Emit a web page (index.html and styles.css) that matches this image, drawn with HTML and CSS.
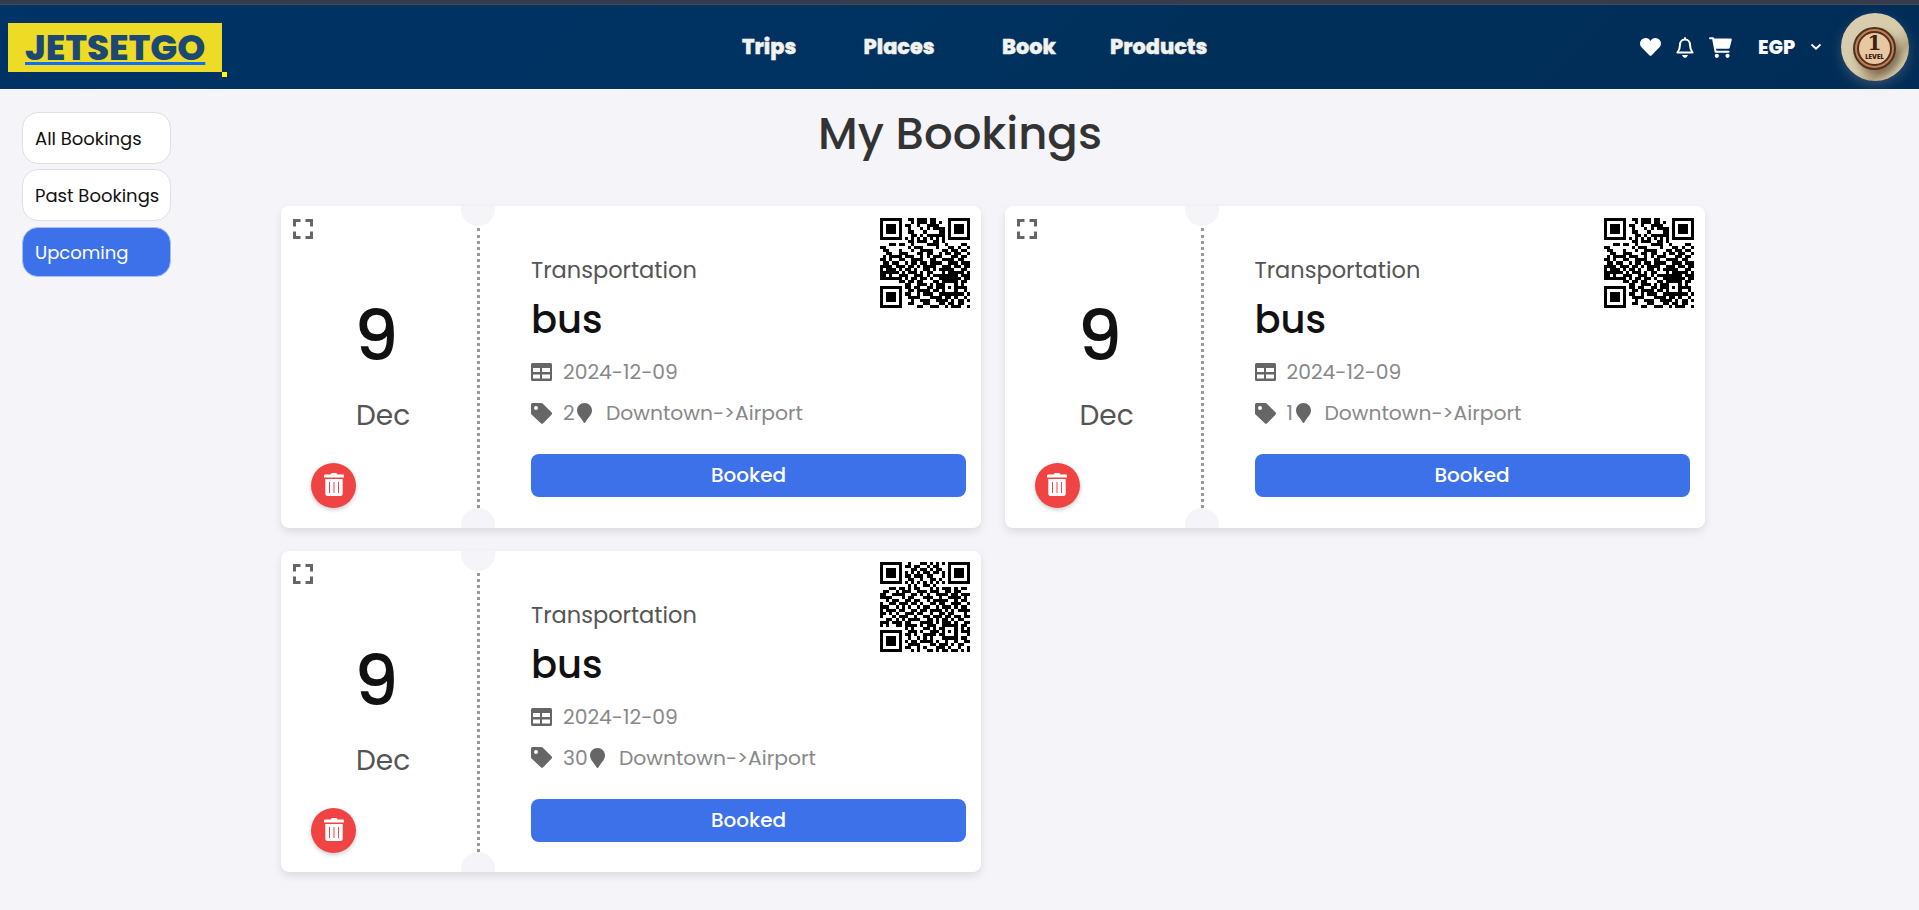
FILE: index.html
```html
<!DOCTYPE html>
<html lang="en">
<head>
<meta charset="utf-8">
<title>JETSETGO - My Bookings</title>
<link rel="stylesheet" href="styles.css">
</head>
<body>
<svg class="sprite" width="0" height="0">
  <symbol id="expand" viewBox="0 0 20 20"><path d="M1.500 7.500v-6h6M12.500 1.500h6v6M18.500 12.500v6h-6M7.500 18.500h-6v-6" fill="none" stroke="#666" stroke-width="3"/></symbol>
  <symbol id="table" viewBox="0 0 21 18"><path fill="#666" fill-rule="evenodd" d="M1.500 0h18q1.500 0 1.500 1.500v15q0 1.500-1.500 1.500h-18Q0 18 0 16.500v-15Q0 0 1.500 0zM2 5v4h7V5zM11 5v4h8V5zM2 11.500v4h7v-4zM11 11.500v4h8v-4z"/></symbol>
  <symbol id="tag" viewBox="0 0 21 21"><path fill="#666" fill-rule="evenodd" d="M1.500 0H11l9.500 9.300q1 1.200 0 2.400l-8.300 8.500q-1.200 1-2.400 0L0 11V1.500Q0 0 1.500 0zM5 3a2 2 0 1 0 0 4a2 2 0 1 0 0-4z"/></symbol>
  <symbol id="pin" viewBox="0 0 15 20"><path fill="#666" d="M7.500 0C3.300 0 0 3.200 0 7.500C0 12 4 14.500 6.500 19.200q1 1.500 2 0C11 14.500 15 12 15 7.500C15 3.200 11.700 0 7.500 0z"/></symbol>
  <symbol id="trash" viewBox="0 0 20 23"><path fill="#fff" fill-rule="evenodd" d="M6.500 1.500Q7 0 8 0h4q1 0 1.500 1.500H19q1 0 1 1.200V4.500H0V2.700q0-1.200 1-1.200zM1.300 6h17.400v14.500q0 2.500-2.500 2.500H3.800q-2.500 0-2.500-2.500zM5 9v11h1V9zM9.500 9v11h1V9zM14 9v11h1V9z"/></symbol>
</svg>
<div class="topstrip"></div>
<header class="header">
  <div class="brand"><a class="logo" href="#">JETSETGO</a><span class="dot"></span></div>
  <nav class="nav">
    <a class="trips">Trips</a><a class="places">Places</a><a class="book">Book</a><a class="products">Products</a>
  </nav>
  <div class="tools">
    <svg class="heart" width="21" height="18" viewBox="0 0 21 18"><path fill="#fff" d="M10.500 3C8.500-.5 4.500-.8 2 1.300C-.5 3.500-.5 7 1.500 9.300l7.800 8q1.200 1 2.400 0l7.800-8C21.500 7 21.500 3.500 19 1.300C16.500-.8 12.500-.5 10.500 3z"/></svg>
    <svg class="bell" width="18" height="21" viewBox="0 0 18 21"><path d="M9 1v1.500M9 2.600c-3.200 0-5 2.400-5 5.400c0 4-1 5.500-2.600 7.500h15.200C15 13.500 14 12 14 8c0-3-1.800-5.400-5-5.400z" fill="none" stroke="#fff" stroke-width="2" stroke-linejoin="round" stroke-linecap="round"/><path fill="#fff" d="M6 18h6q-1 3-3 3t-3-3z"/></svg>
    <svg class="cart" width="23" height="21" viewBox="0 0 23 21"><path d="M1 1.200h3L6.600 14.800h13" fill="none" stroke="#fff" stroke-width="2" stroke-linecap="round" stroke-linejoin="round"/><path fill="#fff" d="M4.500 1.500H22q1 .2.800 1.200l-2 7.800q-.3 1.200-1.500 1.200H6.400z"/><circle cx="7.800" cy="18.800" r="2.100" fill="#fff"/><circle cx="18.500" cy="18.800" r="2.100" fill="#fff"/></svg>
    <span class="currency">EGP</span>
    <svg class="chevron" width="12" height="8" viewBox="0 0 12 8"><path d="M1.500 1.500L6 5.700l4.500-4.200" fill="none" stroke="#fff" stroke-width="2"/></svg>
    <div class="avatar"><div class="coin"><div class="coin-face"><span class="coin-number">1</span><span class="coin-label">LEVEL</span></div></div></div>
  </div>
</header>
<main class="main">
  <aside class="filters">
    <button class="filter">All Bookings</button>
    <button class="filter past">Past Bookings</button>
    <button class="filter active">Upcoming</button>
  </aside>
  <section class="content">
    <h1 class="title">My Bookings</h1>
    <div class="grid">
      <article class="ticket">
        <div class="stub">
          <svg class="expand"><use href="#expand"/></svg>
          <div class="day">9</div><div class="month">Dec</div>
          <button class="delete"><svg width="20" height="23"><use href="#trash"/></svg></button>
        </div>
        <div class="divider"></div>
        <div class="info">
          <div class="kind">Transportation</div><h2 class="name">bus</h2>
          <div class="row date"><svg width="21" height="18"><use href="#table"/></svg><span>2024-12-09</span></div>
          <div class="row place"><svg width="21" height="21"><use href="#tag"/></svg><span class="qty">2</span><svg class="pin" width="15" height="20"><use href="#pin"/></svg><span class="route">Downtown-&gt;Airport</span></div>
          <button class="booked">Booked</button>
        </div>
        <svg class="qr" data-code="a" viewBox="0 0 29 29"></svg>
      </article>
      <article class="ticket">
        <div class="stub">
          <svg class="expand"><use href="#expand"/></svg>
          <div class="day">9</div><div class="month">Dec</div>
          <button class="delete"><svg width="20" height="23"><use href="#trash"/></svg></button>
        </div>
        <div class="divider"></div>
        <div class="info">
          <div class="kind">Transportation</div><h2 class="name">bus</h2>
          <div class="row date"><svg width="21" height="18"><use href="#table"/></svg><span>2024-12-09</span></div>
          <div class="row place"><svg width="21" height="21"><use href="#tag"/></svg><span class="qty one">1</span><svg class="pin" width="15" height="20"><use href="#pin"/></svg><span class="route">Downtown-&gt;Airport</span></div>
          <button class="booked">Booked</button>
        </div>
        <svg class="qr" data-code="a" viewBox="0 0 29 29"></svg>
      </article>
      <article class="ticket">
        <div class="stub">
          <svg class="expand"><use href="#expand"/></svg>
          <div class="day">9</div><div class="month">Dec</div>
          <button class="delete"><svg width="20" height="23"><use href="#trash"/></svg></button>
        </div>
        <div class="divider"></div>
        <div class="info">
          <div class="kind">Transportation</div><h2 class="name">bus</h2>
          <div class="row date"><svg width="21" height="18"><use href="#table"/></svg><span>2024-12-09</span></div>
          <div class="row place"><svg width="21" height="21"><use href="#tag"/></svg><span class="qty thirty">30</span><svg class="pin" width="15" height="20"><use href="#pin"/></svg><span class="route">Downtown-&gt;Airport</span></div>
          <button class="booked">Booked</button>
        </div>
        <svg class="qr" data-code="b" viewBox="0 0 29 29"></svg>
      </article>
    </div>
  </section>
</main>
<script src="qr.js"></script>
</body>
</html>
```
FILE: styles.css
```css
* { box-sizing: border-box; }
body { margin: 0; height: 910px; overflow: hidden; background: #f4f4f9; font-family: Poppins, Inter, sans-serif; color: #111; }
button { font-family: inherit; border: 0; padding: 0; }
svg { flex: none; display: block; }
.sprite { position: absolute; }
.topstrip { height: 5px; background: #343c4e; border-bottom: 1px solid #464950; }
.header { height: 84px; display: flex; align-items: center; background: linear-gradient(135deg, #003366 0%, #003260 50%, #00305a 60%, #002d58 100%); }
.brand { display: flex; align-items: flex-end; width: 742px; padding-left: 8px; height: 48px; margin-top: 1px; }
.logo { width: 214px; height: 49px; padding-left: 17px; background: #eedb25; color: #1c4973; font-size: 35.700px; line-height: 50px; font-weight: 800; text-decoration: underline; text-decoration-color: #0d6efd; text-decoration-thickness: 3px; text-underline-offset: 2px; text-decoration-skip-ink: none; }
.dot { width: 5px; height: 5px; margin-bottom: -5px; background: #ff0; }
.nav { display: flex; color: #f3f1ed; font-size: 20.800px; font-weight: 800; line-height: 30px; width: 898px; -webkit-text-stroke: 0.400px #f3f1ed; }
.trips { width: 121.500px; }
.places { width: 138.500px; }
.book { width: 108px; }
.tools { display: flex; align-items: center; }
.bell { margin-left: 15px; }
.cart { margin-left: 15px; }
.currency { width: 52px; margin-left: 26px; padding-top: 1px; color: #fff; font-size: 19.200px; font-weight: 800; line-height: 28px; }
.avatar { margin-left: 19px; width: 68px; height: 68px; border-radius: 50%; background: linear-gradient(135deg, #d9cfb2, #d6cba9 55%, #b8a785 72%, #e0d6b9 88%); display: flex; align-items: center; justify-content: center; box-shadow: 0 4px 12px rgba(220,180,170,.25); }
.coin { width: 43px; height: 43px; border-radius: 50%; border: 2px solid #54301c; background: #b88158; padding: 2px; box-shadow: 4px 6px 7px rgba(80,60,40,.5); margin-top: 2px; margin-right: 1px; }
.coin-face { width: 35px; height: 35px; border-radius: 50%; border: 2px solid #54301c; background: #e9c7a0; display: flex; flex-direction: column; align-items: center; color: #3b2114; }
.coin-number { font: bold 20px/18px "DejaVu Serif", serif; margin-top: 1px; }
.coin-label { font: 800 6.500px/10px Poppins, Inter, sans-serif; }
.main { display: flex; }
.filters { width: 281px; padding: 23px 0 0 22px; display: flex; flex-direction: column; align-items: flex-start; gap: 5px; }
.filter { width: 149px; height: 52px; border: 1px solid #e0e0e3; border-radius: 16px; background: #fff; color: #111; font-size: 18px; text-align: left; padding: 1px 0 0 12px; }
.active { margin-top: 1px; background: #3d71ea; color: #fff; border-color: #a9bdec; height: 50px; }
.content { width: 1425px; }
.title { margin: 0; height: 117px; padding-left: 537px; font-size: 45px; font-weight: 500; line-height: 89px; color: #333; white-space: nowrap; }
.grid { display: grid; grid-template-columns: 700px 700.500px; column-gap: 23.500px; row-gap: 23px; }
.ticket { position: relative; display: flex; height: 321.600px; background: #fff; border-radius: 8px; box-shadow: 0 4px 8px rgba(0,0,0,.1); }
.ticket::before, .ticket::after { content: ""; position: absolute; left: 180px; width: 34px; height: 20px; background: #f4f4f9; }
.ticket::before { top: 0; border-radius: 0 0 17px 17px; }
.ticket::after { bottom: 0; border-radius: 17px 17px 0 0; }
.stub { width: 196px; padding: 13px 0 0 12px; }
.expand { width: 20px; height: 20px; }
.day { margin: 47px 0 0 61px; height: 100px; font-size: 70px; font-weight: 500; line-height: 100px; }
.month { margin: 10px 0 0 63px; height: 40px; font-size: 28px; line-height: 40px; color: #555; }
.delete { margin: 27px 0 0 18px; width: 45px; height: 45px; border-radius: 50%; background: #f04444; display: flex; align-items: center; justify-content: center; box-shadow: 0 2px 4px rgba(0,0,0,.2); }
.delete svg { margin-top: -2px; }
.divider { margin: 22px 0 20px; width: 3px; border-left: 3px dotted #999; }
.info { width: 435px; margin-left: 51px; padding-top: 49px; }
.kind { height: 30px; font-size: 22.500px; line-height: 30px; color: #555; }
.name { margin: 10px 0 0; height: 50px; font-size: 38.500px; line-height: 50px; font-weight: 500; }
.row { display: flex; align-items: center; height: 30px; color: #888; font-size: 20.300px; line-height: 30px; }
.row span { margin-left: 11px; }
.date { margin-top: 12px; }
.place { margin-top: 11px; }
.row .qty { width: 14px; }
.row .one { width: 9px; }
.row .thirty { width: 27px; }
.row .route { margin-left: 14px; }
.booked { display: block; width: 435px; height: 43px; margin-top: 26px; padding-bottom: 1px; border-radius: 8px; background: #3d71ea; color: #fff; font-size: 20px; font-weight: 500; }
.qr { position: absolute; top: 12px; right: 11px; width: 90px; height: 90px; shape-rendering: crispEdges; }
.ticket:nth-child(3) .qr { top: 11px; }
```
FILE: qr.js
```js
const codes = {
  a: `11111110011011101100001111111
10000010001011101101001000001
10111010110010011110001011101
10111010010001010111101011101
10111010011000100001101011101
10000010001101011111101000001
11111110101010101010101111111
00000000011011100110100000000
00011011001000011110010000110
11000000010111000010001101001
01100010001001111000110110110
00110011100011011001011011001
01011110111001010111000110110
11010011001111001100111101100
01101100101101101111001110111
11110111011010111100111011011
10111010110100110101111100110
11111101011101011000101111101
11010011100111010111111110111
11111110101101101001111111011
00000011011011000110111110110
00000000110011101011100010100
11111110110110011011101011110
10000010011011110110100010010
10111010110010111001111111101
10111010011110001111011010010
10111010001001110011110101101
10000010011000110001101101100
11111110000011001110010111001`,
  b: `11111110010001101010101111111
10000010110110010110001000001
10111010001101101011001011101
10111010101010110110101011101
10111010110111011000101011101
10000010011001001101001000001
11111110101010101010101111111
00000000010100110100000000000
00011011010110001010111010110
01100101110011101110011011000
11001111001101010011110110111
11110001011000111001001111010
00101100110110010111110010110
10011011101101001101100111001
11100101010010110010111010110
10111011001101101111010101111
11010100111011001001101100010
10001011100100110111011011011
00110101011110011010110101100
11101110110001111010111010011
10100110111101011100111110110
00000000101000110101100010101
11111110011101001110101010111
10000010110100111101100010001
10111010010010101000111110110
10111010101101111010010010011
10111010011110001101110101100
10000010110010100011101001001
11111110001010011010110110101`
};
for (const svg of document.querySelectorAll('.qr')) {
  let d = '';
  codes[svg.dataset.code].split('\n').forEach((row, y) => {
    [...row].forEach((cell, x) => { if (cell === '1') d += `M${x} ${y}h1v1h-1z`; });
  });
  const path = document.createElementNS('http://www.w3.org/2000/svg', 'path');
  path.setAttribute('d', d);
  svg.append(path);
}
```
